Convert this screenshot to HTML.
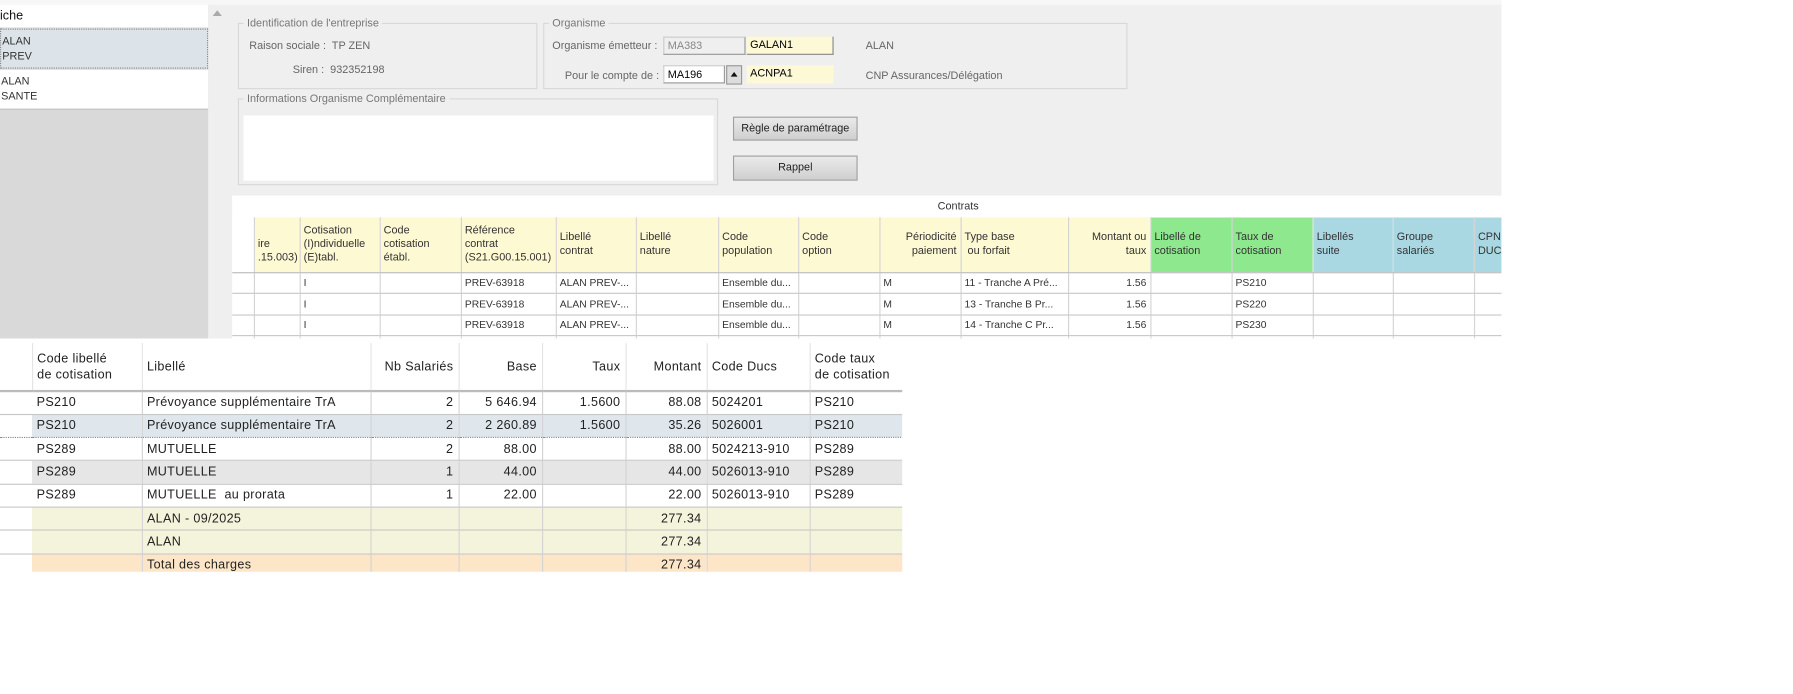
<!DOCTYPE html>
<html><head><meta charset="utf-8">
<style>
*{margin:0;padding:0;box-sizing:border-box}
html,body{width:1793px;height:694px;overflow:hidden;background:#fff;font-family:"Liberation Sans",sans-serif}
#w{position:absolute;left:0;top:0;width:1568px;height:607px;transform:scale(1.14349);transform-origin:0 0}
.a{position:absolute}
.t{font-size:9.5px;color:#666}
fieldset{position:absolute;border:1px solid #d8d8d8;font-size:9.5px;color:#777}
legend{padding:0 3px;margin-left:4px}
table{border-collapse:collapse;table-layout:fixed;position:absolute}
td{overflow:hidden;white-space:nowrap;vertical-align:middle}
#c td{border-right:1px solid #d4d4d4;border-bottom:1px solid #c8c8c8;font-size:9px;color:#333;padding:0 3px;height:18.5px}
#c tr.h td{height:48px;line-height:12px;vertical-align:middle;background:#fdf9d2;border-bottom:1px solid #bbb;font-size:9.5px}
#c tr.h td.g{background:#8ee88e}#c tr.h td.b{background:#a9d8e3}#c tr.h td.w{background:#fff}
#b td{border-right:1px solid #d4d4d4;border-bottom:1px solid #c8c8c8;font-size:11px;color:#222;padding:0 4px;height:20.3px;letter-spacing:0.3px}
#b tr.h td{height:42px;line-height:14px;background:#fff;border-bottom:2px solid #bbb;border-right:1px solid #e4e4e4}
.r{text-align:right}
#b tr.s td{background:#dfe7ec;border-top:1px dotted #888;border-bottom:1px dotted #888}
#b tr.g td{background:#e6e6e6}
#b tr.y td{background:#f4f4dc}
#b tr.o td{background:#fde6c8}
#b td.f{background:#fff!important;border-right:none}
.btn{position:absolute;background:linear-gradient(#eaeaea,#cfcfcf);border:1px solid #a0a0a0;font-size:9.5px;color:#222;text-align:center}
.in{position:absolute;height:16px;font-size:9.5px;padding:2px 3px}
</style></head><body><div id="w">
<div class="a" style="left:0;top:0;width:1313px;height:4px;background:#f7f7f7"></div>
<div class="a" style="left:0;top:4px;width:1313px;height:292px;background:#efefef"></div>
<div class="a" style="left:0;top:4px;width:182px;height:292px;background:#d9d9d9"></div>
<div class="a" style="left:0;top:4px;width:182px;height:20px;background:#fff;font-size:11px;color:#111;padding:4px 0 0 0">iche</div>
<div class="a" style="left:0;top:25px;width:182px;height:35px;background:#dde4e9;border:1px dotted #888;font-size:9.5px;color:#333;padding:4px 1px;line-height:13px">ALAN<br>PREV</div>
<div class="a" style="left:0;top:61px;width:182px;height:35px;background:#fff;border-bottom:1px solid #bbb;font-size:9.5px;color:#333;padding:4px 1px;line-height:13px">ALAN<br>SANTE</div>
<div class="a" style="left:186px;top:9px;width:0;height:0;border-left:4px solid transparent;border-right:4px solid transparent;border-bottom:5px solid #aaa"></div>
<fieldset style="left:208px;top:15px;width:262px;height:63px"><legend>Identification de l'entreprise</legend></fieldset>
<div class="a t" style="left:218px;top:35px">Raison sociale :&nbsp; TP ZEN</div>
<div class="a t" style="left:256px;top:56px">Siren :&nbsp; 932352198</div>
<fieldset style="left:475px;top:15px;width:511px;height:63px"><legend>Organisme</legend></fieldset>
<div class="a t" style="left:483px;top:35px">Organisme émetteur :</div>
<div class="in" style="left:580px;top:32px;width:72px;border:1px solid #999;border-top-color:#ccc;border-left-color:#ccc;color:#888;background:#efefef">MA383</div>
<div class="in" style="left:653px;top:32px;width:76px;background:#fdf8d6;border-bottom:1px solid #888;border-right:1px solid #888">GALAN1</div>
<div class="a t" style="left:757px;top:35px">ALAN</div>
<div class="a t" style="left:494px;top:61px">Pour le compte de :</div>
<div class="in" style="left:580px;top:57px;width:54px;background:#fff;border:1px solid #999;border-top-color:#ccc;border-left-color:#ccc">MA196</div>
<div class="a" style="left:635px;top:57px;width:14px;height:17px;background:#ddd;border:1px solid #999"><div style="margin:5px 0 0 3px;width:0;height:0;border-left:3.5px solid transparent;border-right:3.5px solid transparent;border-bottom:4px solid #111"></div></div>
<div class="in" style="left:653px;top:57px;width:76px;background:#fdf8d6">ACNPA1</div>
<div class="a t" style="left:757px;top:61px">CNP Assurances/Délégation</div>
<fieldset style="left:208px;top:81px;width:420px;height:81px"><legend>Informations Organisme Complémentaire</legend></fieldset>
<div class="a" style="left:213px;top:101px;width:411px;height:57px;background:#fff"></div>
<div class="btn" style="left:641px;top:102px;width:109px;height:21px;line-height:19px">Règle de paramétrage</div>
<div class="btn" style="left:641px;top:136px;width:109px;height:22px;line-height:20px">Rappel</div>
<div class="a" style="left:203px;top:171px;width:1110px;height:125px;background:#fff;overflow:hidden">
<div style="font-size:9.5px;color:#333;height:19px;line-height:19px;padding-left:617px">Contrats</div>
<table id="c" style="left:0;top:19px;width:1120px">
<colgroup><col style="width:19px"><col style="width:40px"><col style="width:70px"><col style="width:71px"><col style="width:83px"><col style="width:70px"><col style="width:72px"><col style="width:70px"><col style="width:71px"><col style="width:71px"><col style="width:94px"><col style="width:72px"><col style="width:71px"><col style="width:71px"><col style="width:70px"><col style="width:71px"><col style="width:40px"></colgroup>
<tr class="h"><td class="w"></td><td><br>ire<br>.15.003)</td><td>Cotisation<br>(I)ndividuelle<br>(E)tabl.</td><td>Code<br>cotisation<br>établ.</td><td>Référence<br>contrat<br>(S21.G00.15.001)</td><td>Libellé<br>contrat</td><td>Libellé<br>nature</td><td>Code<br>population</td><td>Code<br>option</td><td class="r">Périodicité<br>paiement</td><td>Type base<br>&nbsp;ou forfait</td><td class="r">Montant ou<br>taux</td><td class="g">Libellé de<br>cotisation</td><td class="g">Taux de<br>cotisation</td><td class="b">Libellés<br>suite</td><td class="b">Groupe<br>salariés</td><td class="b">CPN<br>DUCS</td></tr>
<tr><td></td><td></td><td>I</td><td></td><td>PREV-63918</td><td>ALAN PREV-...</td><td></td><td>Ensemble du...</td><td></td><td>M</td><td>11 - Tranche A Pré...</td><td class="r">1.56</td><td></td><td>PS210</td><td></td><td></td><td></td></tr>
<tr><td></td><td></td><td>I</td><td></td><td>PREV-63918</td><td>ALAN PREV-...</td><td></td><td>Ensemble du...</td><td></td><td>M</td><td>13 - Tranche B Pr...</td><td class="r">1.56</td><td></td><td>PS220</td><td></td><td></td><td></td></tr>
<tr><td></td><td></td><td>I</td><td></td><td>PREV-63918</td><td>ALAN PREV-...</td><td></td><td>Ensemble du...</td><td></td><td>M</td><td>14 - Tranche C Pr...</td><td class="r">1.56</td><td></td><td>PS230</td><td></td><td></td><td></td></tr>
<tr><td></td><td></td><td></td><td></td><td></td><td></td><td></td><td></td><td></td><td></td><td></td><td></td><td></td><td></td><td></td><td></td><td></td></tr>
</table></div>
<div class="a" style="left:0;top:297px;width:789px;height:203px;overflow:hidden;background:#fff">
<table id="b" style="left:0;top:3px;width:800px">
<colgroup><col style="width:28px"><col style="width:96px"><col style="width:200px"><col style="width:77px"><col style="width:73px"><col style="width:73px"><col style="width:71px"><col style="width:90px"><col style="width:92px"></colgroup>
<tr class="h"><td class="f"></td><td>Code libellé<br>de cotisation</td><td>Libellé</td><td class="r">Nb Salariés</td><td class="r">Base</td><td class="r">Taux</td><td class="r">Montant</td><td>Code Ducs</td><td>Code taux<br>de cotisation</td></tr>
<tr><td class="f"></td><td>PS210</td><td>Prévoyance supplémentaire TrA</td><td class="r">2</td><td class="r">5 646.94</td><td class="r">1.5600</td><td class="r">88.08</td><td>5024201</td><td>PS210</td></tr>
<tr class="s"><td class="f"></td><td>PS210</td><td>Prévoyance supplémentaire TrA</td><td class="r">2</td><td class="r">2 260.89</td><td class="r">1.5600</td><td class="r">35.26</td><td>5026001</td><td>PS210</td></tr>
<tr><td class="f"></td><td>PS289</td><td>MUTUELLE</td><td class="r">2</td><td class="r">88.00</td><td></td><td class="r">88.00</td><td>5024213-910</td><td>PS289</td></tr>
<tr class="g"><td class="f"></td><td>PS289</td><td>MUTUELLE</td><td class="r">1</td><td class="r">44.00</td><td></td><td class="r">44.00</td><td>5026013-910</td><td>PS289</td></tr>
<tr><td class="f"></td><td>PS289</td><td>MUTUELLE&nbsp; au prorata</td><td class="r">1</td><td class="r">22.00</td><td></td><td class="r">22.00</td><td>5026013-910</td><td>PS289</td></tr>
<tr class="y"><td class="f"></td><td></td><td>ALAN - 09/2025</td><td></td><td></td><td></td><td class="r">277.34</td><td></td><td></td></tr>
<tr class="y"><td class="f"></td><td></td><td>ALAN</td><td></td><td></td><td></td><td class="r">277.34</td><td></td><td></td></tr>
<tr class="o"><td class="f"></td><td></td><td>Total des charges</td><td></td><td></td><td></td><td class="r">277.34</td><td></td><td></td></tr>
</table></div>
</div></body></html>
